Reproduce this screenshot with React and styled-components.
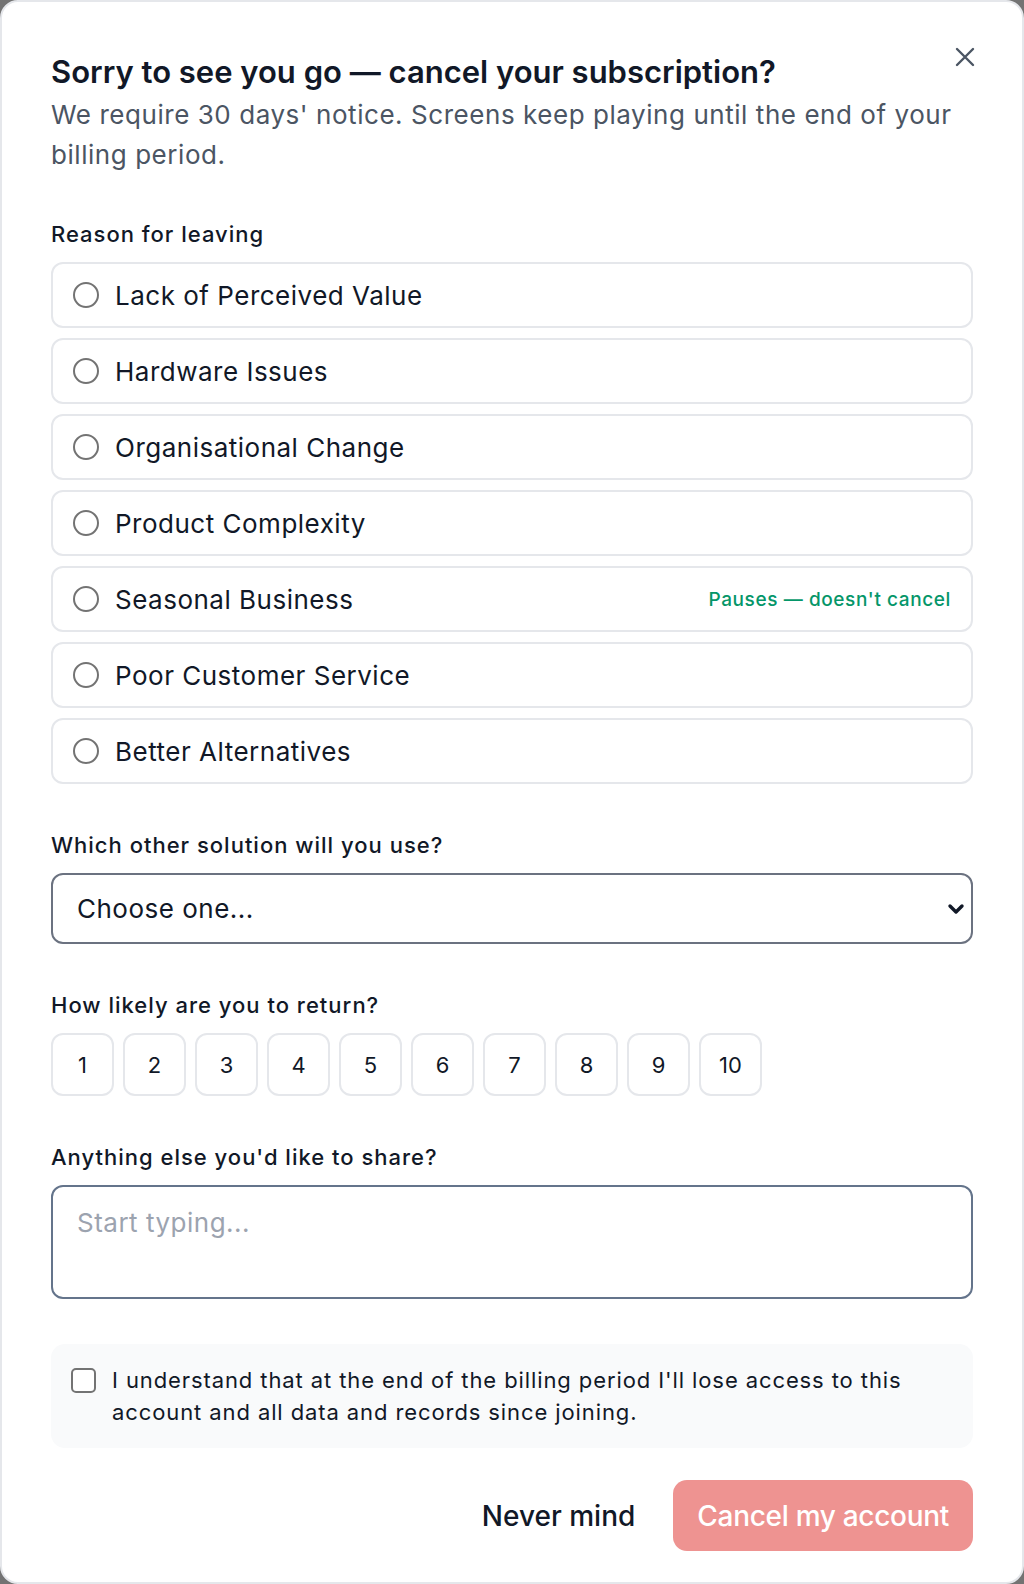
import styled, { createGlobalStyle } from "styled-components"

const GlobalStyle = createGlobalStyle`
  * { box-sizing: border-box; }
  body {
    margin: 0;
    background: #737373;
    font-family: Inter, "Noto Sans", "Liberation Sans", sans-serif;
  }
`

const Card = styled.div`
  position: relative;
  width: 1024px;
  height: 1584px;
  background: #ffffff;
  border: 2px solid #e5e7eb;
  border-radius: 18px;
  padding: 51px 49px 30px 49px;
  display: flex;
  flex-direction: column;
`

const CloseButton = styled.button`
  position: absolute;
  top: 41px;
  right: 43px;
  width: 28px;
  height: 28px;
  padding: 0;
  border: none;
  background: transparent;
  display: flex;
  align-items: center;
  justify-content: center;
  color: #4b5563;
  cursor: pointer;
`

const Title = styled.h2`
  margin: 0;
  font-size: 31px;
  line-height: 38px;
  font-weight: 600;
  color: #111827;
`

const Subtitle = styled.p`
  margin: 4px 0 0 0;
  font-size: 26px;
  line-height: 40px;
  color: #4b5563;
  letter-spacing: 0.55px;
  max-width: 915px;
`

const Form = styled.div`
  display: flex;
  flex-direction: column;
  gap: 47px;
  margin-top: 45px;
`

const Section = styled.div`
  display: flex;
  flex-direction: column;
  gap: 14px;
`

const Label = styled.div`
  font-size: 22px;
  line-height: 28px;
  font-weight: 500;
  color: #111827;
  letter-spacing: 1px;
`

const OptionList = styled.div`
  display: flex;
  flex-direction: column;
  gap: 10px;
`

const Option = styled.label`
  display: flex;
  align-items: center;
  height: 66px;
  padding: 0 20px;
  border: 2px solid #e5e7eb;
  border-radius: 12px;
  cursor: pointer;
`

const Radio = styled.span`
  width: 26px;
  height: 26px;
  border-radius: 50%;
  border: 2px solid #737373;
  flex-shrink: 0;
`

const OptionText = styled.span`
  margin-left: 16px;
  font-size: 26px;
  color: #111827;
  letter-spacing: 0.5px;
  flex: 1;
`

const Hint = styled.span`
  font-size: 19px;
  font-weight: 500;
  color: #059669;
  letter-spacing: 0.6px;
`

const SelectWrap = styled.div`
  position: relative;
`

const Select = styled.select`
  width: 100%;
  height: 71px;
  appearance: none;
  border: 2px solid #6b7280;
  border-radius: 12px;
  background: #ffffff;
  padding: 0 24px;
  font-family: inherit;
  font-size: 26px;
  letter-spacing: 0.5px;
  color: #111827;
`

const Chevron = styled.span`
  position: absolute;
  right: 6px;
  top: 50%;
  transform: translateY(-50%);
  display: flex;
  color: #111827;
  pointer-events: none;
`

const Scale = styled.div`
  display: flex;
  gap: 9px;
`

const ScaleButton = styled.button`
  width: 63px;
  height: 63px;
  border: 2px solid #e5e7eb;
  border-radius: 12px;
  background: #ffffff;
  font-family: inherit;
  font-size: 22px;
  color: #111827;
  cursor: pointer;
`

const TextArea = styled.textarea`
  width: 100%;
  height: 114px;
  resize: none;
  border: 2px solid #64748b;
  border-radius: 12px;
  padding: 20px 24px;
  font-family: inherit;
  font-size: 26px;
  letter-spacing: 0.5px;
  color: #111827;
  &::placeholder {
    color: #9ca3af;
  }
`

const Consent = styled.label`
  display: flex;
  align-items: flex-start;
  gap: 16px;
  background: #f9fafb;
  border-radius: 14px;
  padding: 21px 20px 20px 20px;
  margin-top: -2px;
`

const Checkbox = styled.span`
  width: 25px;
  height: 25px;
  margin-top: 3px;
  border: 2px solid #737373;
  border-radius: 5px;
  background: #ffffff;
  flex-shrink: 0;
`

const ConsentText = styled.span`
  font-size: 22px;
  line-height: 31.5px;
  color: #111827;
  letter-spacing: 0.9px;
`

const Actions = styled.div`
  display: flex;
  justify-content: flex-end;
  align-items: center;
  gap: 16px;
  margin-top: 32px;
`

const GhostButton = styled.button`
  height: 71px;
  padding: 0 22px;
  border: none;
  background: transparent;
  font-family: inherit;
  font-size: 28px;
  font-weight: 500;
  color: #111827;
  cursor: pointer;
`

const DangerButton = styled.button`
  height: 71px;
  padding: 0 24px;
  border: none;
  border-radius: 14px;
  background: #ee9391;
  font-family: inherit;
  font-size: 28px;
  font-weight: 500;
  letter-spacing: -0.3px;
  color: #ffffff;
  cursor: not-allowed;
`

const reasons = [
  { name: "Lack of Perceived Value" },
  { name: "Hardware Issues" },
  { name: "Organisational Change" },
  { name: "Product Complexity" },
  { name: "Seasonal Business", hint: "Pauses — doesn't cancel" },
  { name: "Poor Customer Service" },
  { name: "Better Alternatives" },
]

const App = () => {
  return (
    <>
      <GlobalStyle />
      <Card>
        <CloseButton aria-label="Close">
          <svg width="22" height="22" viewBox="0 0 22 22" fill="none" stroke="currentColor" strokeWidth="2.4" strokeLinecap="round">
            <path d="M3 3L19 19M19 3L3 19" />
          </svg>
        </CloseButton>
        <Title>Sorry to see you go — cancel your subscription?</Title>
        <Subtitle>
          We require 30 days' notice. Screens keep playing until the end of your billing period.
        </Subtitle>
        <Form>
          <Section>
            <Label>Reason for leaving</Label>
            <OptionList>
              {reasons.map((r) => (
                <Option key={r.name}>
                  <Radio />
                  <OptionText>{r.name}</OptionText>
                  {r.hint && <Hint>{r.hint}</Hint>}
                </Option>
              ))}
            </OptionList>
          </Section>
          <Section>
            <Label>Which other solution will you use?</Label>
            <SelectWrap>
              <Select defaultValue="">
                <option value="">Choose one...</option>
              </Select>
              <Chevron>
                <svg width="22" height="22" viewBox="0 0 22 22" fill="none" stroke="currentColor" strokeWidth="3.4" strokeLinecap="round" strokeLinejoin="round">
                  <path d="M5 8L11 14L17 8" />
                </svg>
              </Chevron>
            </SelectWrap>
          </Section>
          <Section>
            <Label>How likely are you to return?</Label>
            <Scale>
              {Array.from({ length: 10 }, (_, i) => (
                <ScaleButton key={i}>{i + 1}</ScaleButton>
              ))}
            </Scale>
          </Section>
          <Section>
            <Label>Anything else you'd like to share?</Label>
            <TextArea placeholder="Start typing..." />
          </Section>
          <Consent>
            <Checkbox />
            <ConsentText>
              I understand that at the end of the billing period I'll lose access to this account and all data and records since joining.
            </ConsentText>
          </Consent>
        </Form>
        <Actions>
          <GhostButton>Never mind</GhostButton>
          <DangerButton>Cancel my account</DangerButton>
        </Actions>
      </Card>
    </>
  )
}

export default App
